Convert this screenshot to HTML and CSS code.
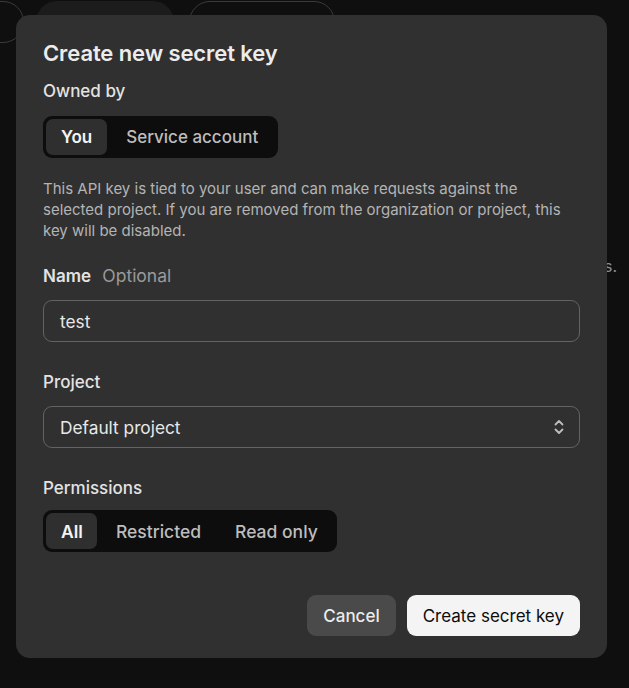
FILE: index.html
```html
<!DOCTYPE html>
<html>
<head>
<meta charset="utf-8">
<link rel="stylesheet" href="styles.css">
</head>
<body>
<div class="page">
  <div class="topbar">
    <div class="pill pill-edge"></div>
    <div class="pill pill-fill"><span class="ghost">Create key</span></div>
    <div class="pill pill-line"><span class="ghost">Add filter</span></div>
    <span class="ghost search">Search</span>
  </div>
  <p class="bg-text">rs.</p>

  <div class="overlay">
    <div class="modal">
      <h1 class="title">Create new secret key</h1>
      <div class="label">Owned by</div>
      <div class="seg seg-owner">
        <span class="seg-item active">You</span>
        <span class="seg-item">Service account</span>
      </div>
      <p class="desc">This API key is tied to your user and can make requests against the selected project. If you are removed from the organization or project, this key will be disabled.</p>

      <div class="label label-name">Name <span class="optional">Optional</span></div>
      <div class="field">test</div>

      <div class="label label-project">Project</div>
      <div class="field select">
        <span>Default project</span>
        <svg class="chev" width="12" height="18" viewBox="0 0 12 18" fill="none" stroke="#bdbdbd" stroke-width="1.8" stroke-linecap="round" stroke-linejoin="round">
          <path d="M2.5 6.5 L6 3 L9.5 6.5"/>
          <path d="M2.5 11.5 L6 15 L9.5 11.5"/>
        </svg>
      </div>

      <div class="label label-perm">Permissions</div>
      <div class="seg seg-perm">
        <span class="seg-item active">All</span>
        <span class="seg-item">Restricted</span>
        <span class="seg-item">Read only</span>
      </div>

      <div class="actions">
        <button class="btn btn-cancel">Cancel</button>
        <button class="btn btn-primary">Create secret key</button>
      </div>
    </div>
  </div>
</div>
</body>
</html>
```
FILE: styles.css
```css
* { box-sizing: border-box; }
html, body {
  margin: 0;
  padding: 0;
  background: #0f0f0f;
  width: 629px;
  height: 688px;
  overflow: hidden;
  font-family: Inter, "Noto Sans", "Liberation Sans", sans-serif;
}
.page {
  position: relative;
  width: 629px;
  height: 688px;
}
.topbar {
  display: flex;
  align-items: flex-start;
  gap: 15px;
  padding-top: 1px;
  margin-left: -116px;
}
.pill {
  height: 42px;
  border-radius: 21px;
}
.pill-edge {
  width: 140px;
  border: 1px solid #3a3a3a;
}
.pill-fill {
  width: 138px;
  background: #1c1c1c;
  margin-left: -3px;
}
.pill-line {
  width: 146px;
  border: 1px solid #3a3a3a;
}
.ghost {
  color: #8a8a8a;
  font-size: 16px;
  line-height: 42px;
  padding-left: 24px;
}
.search { padding-left: 0; }
.bg-text {
  position: absolute;
  left: 598px;
  top: 256px;
  margin: 0;
  color: #8f8f8f;
  font-size: 16px;
}
.overlay {
  position: absolute;
  left: 16px;
  top: 15px;
}
.modal {
  width: 591px;
  height: 643px;
  background: #303030;
  border-radius: 14px;
  padding: 24px 27px 22px 27px;
  display: flex;
  flex-direction: column;
  color: #ececec;
}
.title {
  margin: 0;
  font-size: 22px;
  font-weight: 600;
  letter-spacing: -0.1px;
  line-height: 28px;
  color: #ececec;
}
.label {
  font-size: 17px;
  font-weight: 500;
  line-height: 24px;
  color: #e3e3e3;
  margin-top: 12px;
}
.label-name { margin-top: 23px; font-weight: 600; }
.label-project { margin-top: 28px; }
.label-perm { margin-top: 28px; }
.optional {
  font-weight: 400;
  font-size: 17.5px;
  color: #9a9a9a;
  margin-left: 7px;
}
.seg {
  display: flex;
  align-self: flex-start;
  background: #0d0d0d;
  border-radius: 9px;
  padding: 3px;
  margin-top: 13px;
  height: 42px;
}
.seg-item {
  display: flex;
  align-items: center;
  padding: 0 16px;
  font-size: 17px;
  font-weight: 500;
  color: #bdbdbd;
  border-radius: 7px;
}
.seg-item.active {
  background: #2f2f2f;
  color: #f4f4f4;
  font-weight: 600;
}
.seg-owner .seg-item.active { padding: 0 15px 0 15px; }
.seg-owner .seg-item:last-child { padding: 0 17px 0 19px; }
.seg-perm { margin-top: 10px; }
.seg-perm .seg-item { padding: 0 17px; font-size: 17.5px; }
.seg-perm .seg-item:nth-child(2) { padding-left: 19px; }
.seg-perm .seg-item:last-child { padding-right: 16px; }
.seg-perm .seg-item.active { padding: 0 14px 0 15px; }
.desc {
  margin: 20px 0 0 0;
  font-size: 15px;
  line-height: 21px;
  color: #b4b4b4;
}
.field {
  margin-top: 12px;
  height: 42px;
  border: 1px solid #636363;
  border-radius: 9px;
  display: flex;
  align-items: center;
  padding: 0 16px;
  font-size: 17.3px;
  color: #e8e8e8;
}
.select {
  justify-content: space-between;
  padding-right: 14px;
}
.chev { display: block; }
.actions {
  margin-top: auto;
  display: flex;
  justify-content: flex-end;
  gap: 11px;
}
.btn {
  font-family: inherit;
  font-size: 17px;
  font-weight: 500;
  height: 41px;
  border: none;
  border-radius: 9px;
  padding: 0 16px;
}
.btn-cancel {
  background: #4a4a4a;
  color: #ececec;
}
.btn-primary {
  background: #f4f4f4;
  color: #0d0d0d;
  font-weight: 400;
}
```
